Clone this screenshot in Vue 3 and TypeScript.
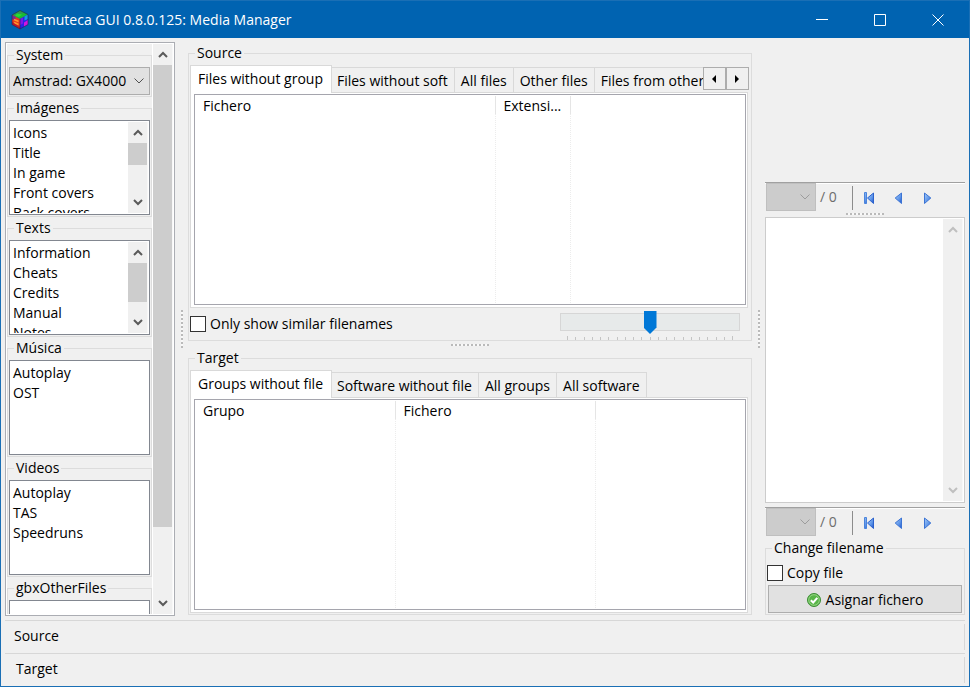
<script setup lang="ts">
import { ref } from 'vue'

interface MediaList {
  title: string
  items: string[]
  thumb?: number
}

interface Column {
  label: string
  width?: number
}

const mediaLists: MediaList[] = [
  { title: 'Imágenes', items: ['Icons', 'Title', 'In game', 'Front covers', 'Back covers'], thumb: 22 },
  { title: 'Texts', items: ['Information', 'Cheats', 'Credits', 'Manual', 'Notes'], thumb: 39 },
  { title: 'Música', items: ['Autoplay', 'OST'] },
  { title: 'Videos', items: ['Autoplay', 'TAS', 'Speedruns'] },
  { title: 'gbxOtherFiles', items: [] },
]

const sourceTabs: string[] = ['Files without group', 'Files without soft', 'All files', 'Other files', 'Files from other']
const targetTabs: string[] = ['Groups without file', 'Software without file', 'All groups', 'All software']
const sourceColumns: Column[] = [{ label: 'Fichero', width: 300 }, { label: 'Extensi...', width: 75 }, { label: '' }]
const targetColumns: Column[] = [{ label: 'Grupo', width: 200 }, { label: 'Fichero', width: 200 }, { label: '' }]

const system = ref('Amstrad: GX4000')
const sourceTab = ref(0)
const targetTab = ref(0)
const onlySimilar = ref(false)
const similarity = ref(10)
const copyFile = ref(false)
const notes = ref('')
</script>

<template>
  <div class="window">
    <header class="titlebar">
      <svg class="app-icon" viewBox="0 0 18 20" aria-hidden="true">
        <path d="M9 0.5 17 4.5 9 9 1 5z" fill="#18b838" />
        <path d="M9 0.5 13 2.5 6 6.5 1 5z" fill="#2f9a50" />
        <path d="M6 3.5 11 4.5 8 7 4 6z" fill="#25e02c" />
        <path d="M1 5 9 9v10L1 14.5z" fill="#e8381c" />
        <path d="M1 5 4.5 6.8v4L1 9z" fill="#7c2a8c" />
        <path d="M3 9.5 7.500 11.500M3 12.500l4.500 2" stroke="#ff9a2c" stroke-width="1.500" fill="none" />
        <path d="M1 12 5 14.500 9 17v2L1 14.500z" fill="#b81a30" />
        <path d="M17 4.500 9 9v10l8-4.500z" fill="#2a22e8" />
        <path d="M17 4.500 13.500 6.500v4L17 9z" fill="#1598e8" />
        <path d="M9 9 12 7.400v6L9 15z" fill="#7a18e8" />
        <path d="M13 12.500 17 10v4.500l-4 2.200z" fill="#d014e0" />
        <path d="M9 .5 17 4.500v10L9 19 1 14.500V5zM9 9v10" fill="none" stroke="#24204c" stroke-width=".6" />
      </svg>
      <h1>Emuteca GUI 0.8.0.125: Media Manager</h1>
      <div class="window-buttons">
        <button type="button" aria-label="Minimize">
          <svg viewBox="0 0 12 12"><path d="M0 5.500h12" /></svg>
        </button>
        <button type="button" aria-label="Maximize">
          <svg viewBox="0 0 12 12"><path d="M.5.5h11v11H.5z" /></svg>
        </button>
        <button type="button" aria-label="Close">
          <svg viewBox="0 0 12 12"><path d="M.5.5l11 11M11.500.5l-11 11" /></svg>
        </button>
      </div>
    </header>

    <main class="workspace">
      <aside class="sidebar">
        <div class="sidebar-content">
          <fieldset class="group side-group">
            <legend>System</legend>
            <div class="combo">
              <select v-model="system" aria-label="System">
                <option>Amstrad: GX4000</option>
              </select>
              <svg class="combo-arrow" viewBox="0 0 10 6"><path d="M.5.5 5 5 9.500.5" /></svg>
            </div>
          </fieldset>
          <fieldset v-for="list in mediaLists" :key="list.title" class="group side-group">
            <legend>{{ list.title }}</legend>
            <div class="listbox">
              <ul role="listbox" :aria-label="list.title">
                <li v-for="item in list.items" :key="item" role="option">{{ item }}</li>
              </ul>
              <div v-if="list.thumb" class="scrollbar">
                <button type="button" aria-label="Scroll up">
                  <svg viewBox="0 0 10 7"><path d="M1 6 5 2l4 4" /></svg>
                </button>
                <div class="track"><div class="thumb" :style="{ height: list.thumb + 'px' }"></div></div>
                <button type="button" aria-label="Scroll down">
                  <svg viewBox="0 0 10 7"><path d="M1 1l4 4 4-4" /></svg>
                </button>
              </div>
            </div>
          </fieldset>
        </div>
        <div class="scrollbar">
          <button type="button" aria-label="Scroll up">
            <svg viewBox="0 0 10 7"><path d="M1 6 5 2l4 4" /></svg>
          </button>
          <div class="track column"><div class="thumb filled"></div><div class="rest"></div></div>
          <button type="button" aria-label="Scroll down">
            <svg viewBox="0 0 10 7"><path d="M1 1l4 4 4-4" /></svg>
          </button>
        </div>
      </aside>

      <div class="splitter vertical"><i></i></div>

      <section class="center">
        <fieldset class="group file-group source">
          <legend>Source</legend>
          <div class="tab-row">
            <div class="tabs" role="tablist">
              <button
                v-for="(tab, i) in sourceTabs"
                :key="tab"
                type="button"
                role="tab"
                class="tab"
                :class="{ active: i === sourceTab }"
                :aria-selected="i === sourceTab"
                @click="sourceTab = i"
              >{{ tab }}</button>
            </div>
            <div class="tab-nav">
              <button type="button" aria-label="Previous tabs">
                <svg viewBox="0 0 4 8"><path d="M4 0v8L0 4z" /></svg>
              </button>
              <button type="button" aria-label="Next tabs">
                <svg viewBox="0 0 4 8"><path d="M0 0v8l4-4z" /></svg>
              </button>
            </div>
          </div>
          <div class="pane">
            <div class="tree">
              <table>
                <colgroup>
                  <col v-for="(c, i) in sourceColumns" :key="i" :style="c.width ? { width: c.width + 'px' } : {}" />
                </colgroup>
                <thead>
                  <tr><th v-for="(c, i) in sourceColumns" :key="i">{{ c.label }}</th></tr>
                </thead>
                <tbody>
                  <tr><td v-for="(c, i) in sourceColumns" :key="i"></td></tr>
                </tbody>
              </table>
            </div>
          </div>
          <div class="options">
            <label class="check"><input v-model="onlySimilar" type="checkbox" />Only show similar filenames</label>
            <div class="slider">
              <input v-model.number="similarity" type="range" min="0" max="20" aria-label="Similarity" />
              <div class="ticks"><i v-for="n in 21" :key="n"></i></div>
            </div>
          </div>
        </fieldset>

        <div class="splitter horizontal"><i></i></div>

        <fieldset class="group file-group target">
          <legend>Target</legend>
          <div class="tab-row">
            <div class="tabs" role="tablist">
              <button
                v-for="(tab, i) in targetTabs"
                :key="tab"
                type="button"
                role="tab"
                class="tab"
                :class="{ active: i === targetTab }"
                :aria-selected="i === targetTab"
                @click="targetTab = i"
              >{{ tab }}</button>
            </div>
          </div>
          <div class="pane">
            <div class="tree">
              <table>
                <colgroup>
                  <col v-for="(c, i) in targetColumns" :key="i" :style="c.width ? { width: c.width + 'px' } : {}" />
                </colgroup>
                <thead>
                  <tr><th v-for="(c, i) in targetColumns" :key="i">{{ c.label }}</th></tr>
                </thead>
                <tbody>
                  <tr><td v-for="(c, i) in targetColumns" :key="i"></td></tr>
                </tbody>
              </table>
            </div>
          </div>
        </fieldset>
      </section>

      <div class="splitter vertical"><i></i></div>

      <aside class="preview">
        <svg class="defs" width="0" height="0" aria-hidden="true">
          <linearGradient id="arrow-left" x1="0" y1="0" x2="1" y2="1">
            <stop offset="0" stop-color="#a8ccf8" />
            <stop offset=".6" stop-color="#5c94e8" />
            <stop offset="1" stop-color="#1c50c8" />
          </linearGradient>
        </svg>
        <div class="picture"></div>
        <template v-for="area in ['image', 'text']" :key="area">
          <div class="toolbar">
            <div class="combo disabled">
              <select disabled :aria-label="'Current ' + area"></select>
              <svg class="combo-arrow" viewBox="0 0 10 6"><path d="M.5.5 5 5 9.500.5" /></svg>
            </div>
            <span class="count">/ 0</span>
            <div class="nav">
              <button type="button" aria-label="First">
                <svg viewBox="0 0 12 14">
                  <path d="M1.500 1.500h2v11h-2z" fill="url(#arrow-left)" stroke="#4a84dc" />
                  <path d="M10.500 2v10.500L4.500 7z" fill="url(#arrow-left)" stroke="#2c62cc" />
                </svg>
              </button>
              <button type="button" aria-label="Previous">
                <svg viewBox="0 0 12 14">
                  <path d="M9.500 2v10.500L3.200 7z" fill="url(#arrow-left)" stroke="#3c74d4" />
                </svg>
              </button>
              <button type="button" aria-label="Next">
                <svg viewBox="0 0 12 14">
                  <path d="M3.500 2v10.500L9.800 7z" fill="url(#arrow-left)" stroke="#3c74d4" />
                </svg>
              </button>
            </div>
          </div>
          <template v-if="area === 'image'">
            <div class="splitter horizontal"><i></i></div>
            <div class="memo">
              <textarea v-model="notes" aria-label="Text"></textarea>
              <div class="scrollbar idle">
                <button type="button" aria-label="Scroll up">
                  <svg viewBox="0 0 10 7"><path d="M1 6 5 2l4 4" /></svg>
                </button>
                <div class="track"></div>
                <button type="button" aria-label="Scroll down">
                  <svg viewBox="0 0 10 7"><path d="M1 1l4 4 4-4" /></svg>
                </button>
              </div>
            </div>
          </template>
        </template>
        <fieldset class="group change">
          <legend>Change filename</legend>
          <label class="check"><input v-model="copyFile" type="checkbox" />Copy file</label>
          <button type="button" class="assign">
            <svg viewBox="0 0 14 14">
              <circle cx="7" cy="7" r="6.500" fill="#58b548" stroke="#3c8c34" />
              <circle cx="7" cy="7" r="5.300" fill="none" stroke="#a4dc94" stroke-width=".8" />
              <path d="M3.800 7.200 6.200 9.500 10.300 4.800" fill="none" stroke="#fff" stroke-width="2" />
            </svg>
            Asignar fichero
          </button>
        </fieldset>
      </aside>
    </main>

    <footer>
      <div class="status"><span>Source</span></div>
      <div class="status second"><span>Target</span></div>
    </footer>
  </div>
</template>

<style>
body {
  margin: 0;
}
</style>

<style scoped>
* {
  box-sizing: border-box;
}

.window {
  display: flex;
  flex-direction: column;
  height: 100vh;
  border: 1px solid #1a6fb5;
  background: #f0f0f0;
  color: #000;
  font: 14px/20px 'Open Sans', 'Noto Sans', sans-serif;
  overflow: hidden;
}

button,
select,
input,
textarea {
  margin: 0;
  padding: 0;
  border: 0;
  border-radius: 0;
  background: none;
  color: inherit;
  font: inherit;
  appearance: none;
}

button {
  display: flex;
  align-items: center;
  justify-content: center;
}

/* Title bar */
.titlebar {
  display: flex;
  align-items: center;
  flex: none;
  height: 37px;
  padding: 0 2px 0 10px;
  background: #0063b1;
  color: #fff;
}

.app-icon {
  width: 18px;
  height: 20px;
}

h1 {
  flex: 1;
  margin: 0 0 0 6px;
  font-size: 14px;
  font-weight: 400;
  white-space: nowrap;
}

.window-buttons {
  display: flex;
}

.window-buttons button {
  width: 58px;
  height: 36px;
}

.window-buttons svg {
  width: 12px;
  height: 12px;
  fill: none;
  stroke: #fff;
}

/* Work area */
.workspace {
  display: flex;
  flex: 1;
  min-height: 0;
  padding: 4px;
}

.group {
  display: flex;
  flex-direction: column;
  min-width: 0;
  margin: 0;
  padding: 2px 1px 1px;
  border: 1px solid #dcdcdc;
}

legend {
  height: 20px;
  margin-left: 5px;
  padding: 0 2px;
}

.combo {
  display: grid;
  align-items: center;
  height: 28px;
  border: 1px solid #adadad;
  background: #e1e1e1;
}

.combo select {
  grid-area: 1 / 1;
  width: 100%;
  min-width: 0;
  height: 26px;
  padding: 0 22px 0 3px;
}

.combo-arrow {
  grid-area: 1 / 1;
  justify-self: end;
  width: 10px;
  height: 6px;
  margin-right: 5px;
  fill: none;
  stroke: #505050;
  pointer-events: none;
}

.scrollbar {
  display: flex;
  flex: none;
  flex-direction: column;
  width: 20px;
  border-right: 1px solid #f8f8f8;
  background: #f0f0f0;
}

.scrollbar button {
  flex: none;
  height: 21px;
}

.scrollbar svg {
  width: 10px;
  height: 7px;
  fill: none;
  stroke: #5a5a5a;
  stroke-width: 2;
}

.scrollbar.idle svg {
  stroke: #bfbfbf;
}

.track {
  flex: 1;
  min-height: 0;
}

.track.column {
  display: flex;
  flex-direction: column;
}

.thumb {
  background: #cdcdcd;
}

.filled {
  flex: 7;
}

.rest {
  flex: 1;
}

/* Sidebar */
.sidebar {
  display: flex;
  flex: none;
  width: 170px;
  border: 1px solid #abadb3;
  padding: 1px;
  background: #fff;
}

.sidebar-content {
  display: flex;
  flex: 1;
  flex-direction: column;
  gap: 1px;
  min-width: 0;
  margin-right: 1px;
  padding-top: 1px;
  background: #f0f0f0;
  overflow: hidden;
}

.side-group {
  flex: none;
}

.listbox {
  display: flex;
  height: 95px;
  padding: 1px;
  border: 1px solid #828790;
  background: #fff;
  overflow: hidden;
}

.listbox ul {
  flex: 1;
  min-width: 0;
  margin: 0;
  padding: 1px 2px;
  list-style: none;
  overflow: hidden;
  white-space: nowrap;
}

.listbox li {
  height: 20px;
}

/* Splitter grips */
.splitter {
  display: flex;
  flex: none;
  align-items: center;
  justify-content: center;
}

.vertical {
  width: 13px;
}

.horizontal {
  height: 7px;
}

.vertical i {
  width: 2px;
  height: 38px;
  background: repeating-linear-gradient(to bottom, #bababa 0 2px, #f8f8f8 2px 4px);
}

.horizontal i {
  width: 38px;
  height: 2px;
  background: repeating-linear-gradient(to right, #bababa 0 2px, #f8f8f8 2px 4px);
}

/* Source and target */
.center {
  display: flex;
  flex: 1;
  flex-direction: column;
  min-width: 0;
  padding: 1px 0;
}

.file-group {
  min-height: 0;
  padding-right: 3px;
}

.source {
  flex: 1 1 82px;
  padding-bottom: 0;
}

.target {
  flex: 1 1 51px;
}

.tab-row {
  display: flex;
  flex: none;
  height: 28px;
  margin-bottom: -1px;
  margin-right: -1px;
  position: relative;
}

.tabs {
  display: flex;
  flex: 1;
  min-width: 0;
  align-items: flex-start;
  overflow: hidden;
}

.tab {
  flex: none;
  height: 26px;
  margin-top: 2px;
  padding: 2px 6px 0;
  border: 1px solid #d9d9d9;
  border-left: 0;
  white-space: nowrap;
}

.tab.active {
  height: 28px;
  margin-top: 0;
  padding: 0 8px 2px 7px;
  border-left: 1px solid #d9d9d9;
  border-bottom: 0;
  background: #fff;
}

.active + .tab {
  padding-left: 5px;
}

.tab-nav {
  display: flex;
  flex: none;
  padding-top: 2px;
}

.tab-nav button {
  width: 23px;
  height: 23px;
  padding-right: 2px;
  border: 1px solid #adadad;
  background: #f0f0f0;
}

.tab-nav svg {
  width: 4px;
  height: 8px;
}

.pane {
  display: flex;
  flex: 1;
  min-height: 0;
  padding: 1px 1px 2px 3px;
  border: 1px solid #dadada;
  background: #fff;
}

.tree {
  display: flex;
  flex: 1;
  min-width: 0;
  padding: 1px 0;
  border: 1px solid #a5a5ad;
}

table {
  flex: 1;
  width: 100%;
  table-layout: fixed;
  border-collapse: collapse;
}

th {
  height: 18px;
  padding: 1px 0 0 8px;
  border-right: 1px solid #e5e5e5;
  font-weight: 400;
  line-height: 17px;
  text-align: left;
  white-space: nowrap;
}

td {
  height: 100%;
  padding: 0;
  border-right: 1px dotted #ececec;
}

th:last-child,
td:last-child {
  border-right: 0;
}

.options {
  display: flex;
  flex: none;
  justify-content: space-between;
  height: 32px;
  padding-right: 8px;
}

.check {
  display: flex;
  align-items: center;
  gap: 4px;
}

.check input {
  width: 16px;
  height: 16px;
  border: 1px solid #333;
  background: #fff;
}

.check input:checked {
  box-shadow: inset 0 0 0 3px #fff;
  background: #333;
}

.slider {
  display: flex;
  flex-direction: column;
  width: 180px;
  padding-top: 3px;
}

.slider input {
  display: block;
  width: 180px;
  height: 23px;
  background: linear-gradient(#e7eaea, #e7eaea) 1px 3px / 178px 16px no-repeat,
    linear-gradient(#d6d6d6, #d6d6d6) 0 2px / 180px 18px no-repeat;
}

.slider input::-webkit-slider-thumb {
  appearance: none;
  width: 13px;
  height: 23px;
  background: #0078d7;
  clip-path: polygon(0 0, 100% 0, 100% 72%, 50% 100%, 0 72%);
}

.ticks {
  display: flex;
  align-items: flex-end;
  justify-content: space-between;
  height: 6px;
  padding: 0 7px;
}

.ticks i {
  width: 1px;
  height: 3px;
  background: #c4c4c4;
}

.ticks i:first-child,
.ticks i:last-child {
  height: 4px;
}

/* Preview column */
.preview {
  display: flex;
  flex: none;
  flex-direction: column;
  width: 200px;
  padding-bottom: 1px;
}

.defs {
  flex: none;
}

.picture {
  flex: 1 1 0;
}

.toolbar {
  display: flex;
  flex: none;
  height: 29px;
  padding-left: 1px;
  border-top: 1px solid #a0a0a0;
  box-shadow: inset 0 1px #fff;
}

.combo.disabled {
  width: 50px;
  border-color: #bfbfbf;
  background: #ccc;
}

.disabled .combo-arrow {
  stroke: #9c9c9c;
}

.count {
  width: 36px;
  padding: 4px 0 0 4px;
  color: #6d6d6d;
}

.nav {
  display: flex;
  height: 24px;
  margin-top: 3px;
  padding-left: 1px;
  border-left: 1px solid #8c8c8c;
}

.nav button {
  width: 29px;
}

.nav svg {
  width: 12px;
  height: 14px;
}

.preview .horizontal {
  height: 6px;
}

.memo {
  display: flex;
  flex: 2 1 6px;
  min-height: 0;
  margin-bottom: 4px;
  padding: 1px;
  border: 1px solid #ccc;
  background: #fff;
}

.memo textarea {
  flex: 1;
  min-width: 0;
  resize: none;
  outline: 0;
}

.change {
  flex: none;
  margin-top: 2px;
  padding-top: 5px;
}

.assign {
  gap: 5px;
  height: 28px;
  margin: 2px 1px 0;
  padding-top: 1px;
  border: 1px solid #adadad;
  background: #e1e1e1;
}

.assign svg {
  width: 14px;
  height: 14px;
}

/* Status rows */
footer {
  flex: none;
  padding: 0 4px;
}

.status {
  display: flex;
  align-items: center;
  height: 33px;
  border-top: 1px solid #d7d7d7;
}

.status span {
  flex: 1;
  height: 26px;
  padding: 2px 9px;
  border-right: 1px solid #d7d7d7;
}

.status.second span {
  padding-left: 11px;
}
</style>
